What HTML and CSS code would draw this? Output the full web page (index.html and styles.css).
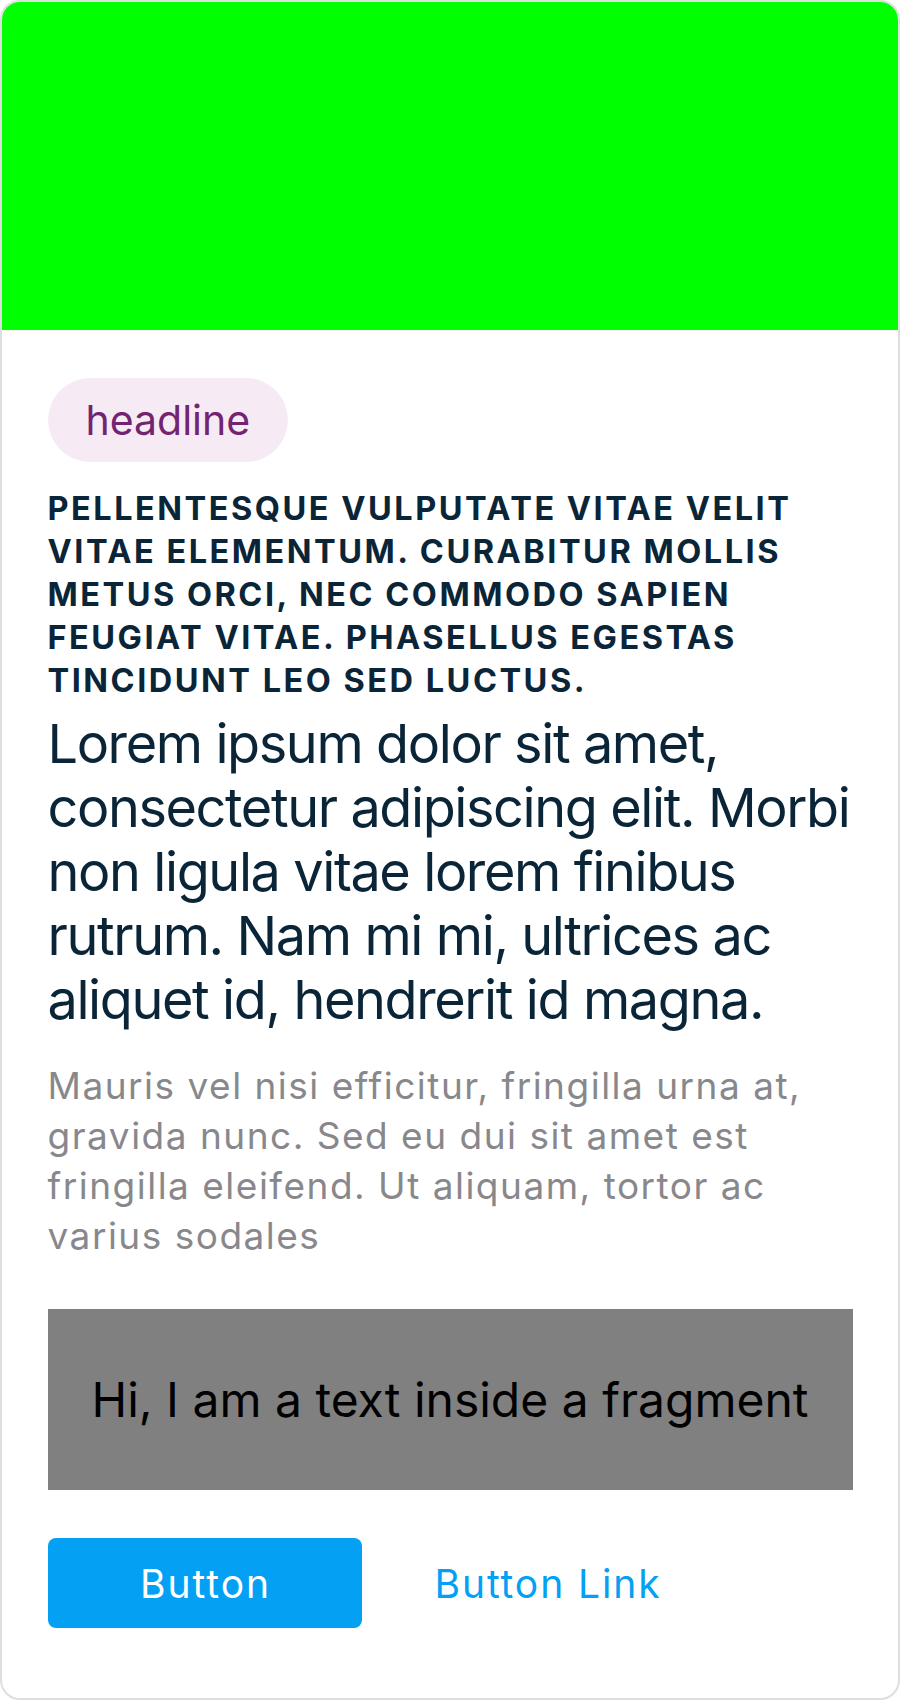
FILE: index.html
```html
<!DOCTYPE html>
<html lang="en">
<head>
<meta charset="utf-8">
<title>Card</title>
<link rel="stylesheet" href="styles.css">
</head>
<body>
<div class="card">
  <div class="media"></div>
  <div class="content">
    <span class="tag">headline</span>
    <h2 class="overline">Pellentesque vulputate vitae velit vitae elementum. Curabitur mollis metus orci, nec commodo sapien feugiat vitae. Phasellus egestas tincidunt leo sed luctus.</h2>
    <p class="lead">Lorem ipsum dolor sit amet, consectetur adipiscing elit. Morbi non ligula vitae lorem finibus rutrum. Nam mi mi, ultrices ac aliquet id, hendrerit id magna.</p>
    <p class="muted">Mauris vel nisi efficitur, fringilla urna at, gravida nunc. Sed eu dui sit amet est fringilla eleifend. Ut aliquam, tortor ac varius sodales</p>
    <div class="fragment">Hi, I am a text inside a fragment</div>
    <div class="actions">
      <button class="btn">Button</button>
      <a class="btn-link" href="#">Button Link</a>
    </div>
  </div>
</div>
</body>
</html>
```
FILE: styles.css
```css
* { box-sizing: border-box; }
html, body { margin: 0; padding: 0; background: #ffffff; }
body { font-family: Inter, "Noto Sans", sans-serif; }

.card {
  width: 900px;
  height: 1700px;
  border: 2.5px solid #dedede;
  border-radius: 20px;
  overflow: hidden;
  background: #ffffff;
  display: flex;
  flex-direction: column;
}

.media {
  height: 328px;
  background: #00ff00;
  flex: none;
}

.content {
  padding: 48px 45.5px 0 45.5px;
  display: flex;
  flex-direction: column;
  align-items: flex-start;
}

.tag {
  display: inline-flex;
  align-items: center;
  height: 84px;
  padding: 0 38px;
  border-radius: 42px;
  background: #f6ebf5;
  color: #722470;
  font-size: 41px;
  font-weight: 400;
}

.overline {
  margin: 25px 0 0 0;
  font-size: 32.5px;
  line-height: 43px;
  font-weight: 700;
  letter-spacing: 2.5px;
  text-transform: uppercase;
  color: #0b2538;
}

.lead {
  margin: 10px 0 0 0;
  font-size: 54px;
  line-height: 64px;
  font-weight: 400;
  letter-spacing: -1.4px;
  color: #0b2538;
}

.muted {
  margin: 29px 0 0 0;
  font-size: 37px;
  line-height: 50px;
  font-weight: 400;
  letter-spacing: 1.5px;
  color: #88888c;
}

.fragment {
  align-self: stretch;
  margin-top: 48px;
  height: 181px;
  background: #808080;
  display: flex;
  align-items: center;
  justify-content: center;
  font-size: 48px;
  color: #000000;
}

.actions {
  margin-top: 48px;
  display: flex;
  align-items: center;
  gap: 73px;
}

.btn {
  width: 314px;
  height: 90px;
  border: none;
  border-radius: 8px;
  background: #03a0f4;
  color: #ffffff;
  font-family: Inter, "Noto Sans", sans-serif;
  font-size: 39px;
  letter-spacing: 2px;
  padding: 0 0 0 2px;
}

.btn-link {
  color: #03a0f4;
  font-size: 39px;
  letter-spacing: 1.9px;
  text-decoration: none;
}
```
